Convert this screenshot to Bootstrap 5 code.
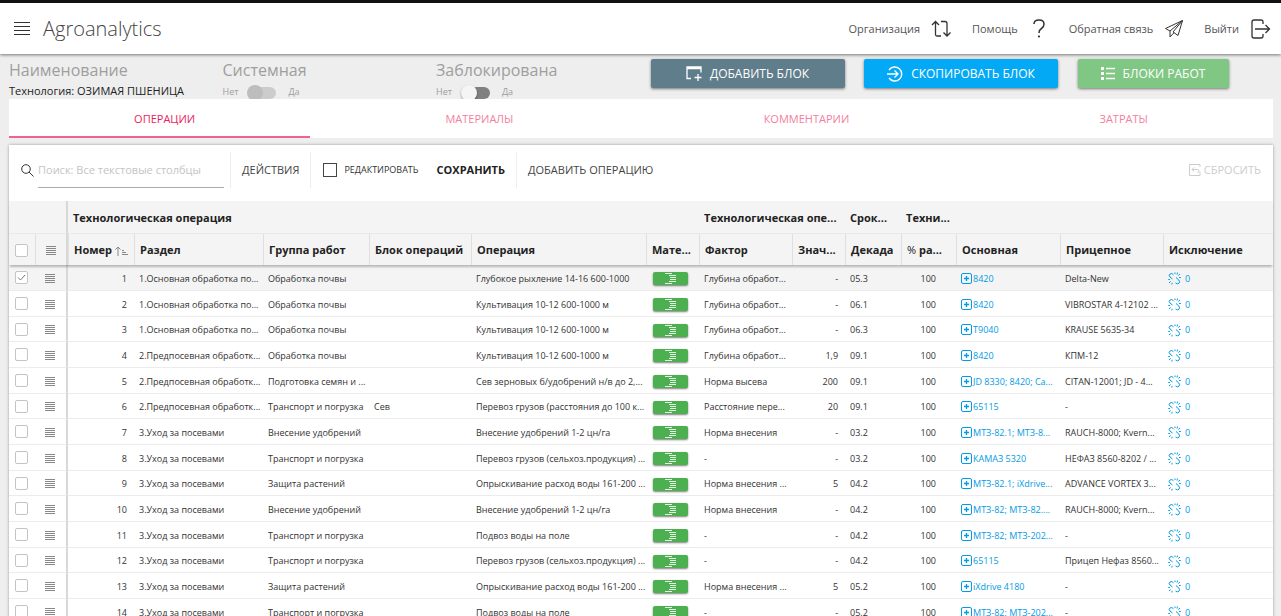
<!DOCTYPE html>
<html lang="ru">
<head>
<meta charset="utf-8">
<meta name="viewport" content="width=device-width, initial-scale=1">
<title>Agroanalytics</title>
<link href="https://cdn.jsdelivr.net/npm/bootstrap@5.3.0/dist/css/bootstrap.min.css" rel="stylesheet">
<style>
  body { font-family: "Open Sans", "Noto Sans", sans-serif; background: #eee; color: #333; font-size: 12px; overflow: hidden; height: 100vh; }
  button { font-family: inherit; }
  svg { fill: none; stroke: currentColor; flex: none; }
  .topbar { border-top: 3px solid #111; height: 54px; background: #fff; box-shadow: 0 1px 3px rgba(0,0,0,.5); position: relative; padding: 1px 10px 0 14px; }
  .brand-name { font-size: 20px; font-weight: 300; color: #444; line-height: 30px; margin-left: 13px; }
  .top-nav { gap: 20px; }
  .top-link { color: #555; font-size: 11px; text-decoration: none; gap: 11px; }
  .top-link svg { color: #333; }
  .fields { height: 45px; overflow: hidden; }
  .fields > div { padding: 0 9px; }
  .caption { font-size: 16px; line-height: 22px; color: #9e9e9e; padding-top: 5px; }
  .tech { font-size: 11px; line-height: 20px; color: #222; white-space: nowrap; }
  .toggle-row { font-size: 9px; line-height: 20px; color: #9e9e9e; padding-top: 1px; }
  .toggle { appearance: none; width: 24px; height: 12px; border-radius: 6px; margin: 5px 12px 0 14px; background: #ccc; display: inline-flex; align-items: center; }
  .toggle::before { content: ""; width: 16px; height: 16px; margin-left: -5px; flex: none; border-radius: 50%; background: #bdbdbd; }
  .toggle.on { background: #808080; }
  .toggle.on::before { background: #f5f5f5; box-shadow: 0 1px 2px rgba(0,0,0,.4); }
  .action { height: 29px; margin: 5px 0 0 1px; border: 0; border-radius: 2px; color: #fff; font-size: 12px; gap: 8px; box-shadow: 0 1px 3px rgba(0,0,0,.5); white-space: nowrap; padding: 0; width: 194px; }
  .slate { background: #607d8b; } .sky { background: #03a9f4; } .leaf { background: #81c784; width: 151px; }
  .tabs { margin: 0 8px 0 9px; background: #fff; height: 39px; }
  .tabs button { border: 0; background: none; color: #f4809f; font-size: 11px; flex: 1 1 auto; padding: 2px 0 0; }
  .tabs button.active { color: #e91e63; background: linear-gradient(#f06292, #f06292) left bottom / calc(100% - 10px) 2px no-repeat; }
  .panel { margin: 7px 8px 0 9px; background: #fff; box-shadow: 0 0 3px rgba(0,0,0,.35); }
  .tools { height: 56px; padding: 0 12px 6px; font-size: 11px; }
  .tools button { border: 0; background: none; padding: 0; color: #444; }
  .tools .spaced { margin: 0 11px; }
  .tools .save { margin: 0 11px 0 18px; color: #222; }
  .tools .reset { color: #ccc; gap: 3px; }
  .edit-box { margin-left: 12px; gap: 7px; font-size: 9px; }
  .search { width: 186px; height: 36px; border: 0; border-bottom: 1px solid #aaa; outline: 0; padding: 0; margin: 0 6px 0 4px; font-size: 11px; }
  .search::placeholder { color: #c4c4c4; }
  .rule { width: 1px; height: 36px; background: #eee; }
  .tick { appearance: none; background: #fff; border: 1px solid #c4c4c4; border-radius: 2px; width: 13px; height: 13px; display: block; margin: 0 0 0 1px; }
  .tick:checked { background: #fff url("data:image/svg+xml,%3Csvg xmlns='http://www.w3.org/2000/svg' viewBox='0 0 11 11' fill='none' stroke='%23777'%3E%3Cpath d='M2 5.500 4.500 8 9 3'/%3E%3C/svg%3E"); }
  .tick.large { width: 14px; height: 14px; border-color: #444; border-radius: 0; margin: 0; }
  .grid-table { table-layout: fixed; width: 100%; border-collapse: separate; border-spacing: 0; font-size: 9px; }
  .grid-table th, .grid-table td { padding: 0 0 0 5px; white-space: nowrap; overflow: hidden; }
  .grid-table th { background: #f4f4f4; color: #222; font-size: 11px; font-weight: 700; height: 32px; padding-top: 2px; }
  .grid-table thead { box-shadow: 0 3px 2px -1px rgba(0,0,0,.25); position: relative; }
  .grid-table thead tr:last-child th { border-top: 1px solid #e9e9e9; border-left: 1px solid #e0e0e0; }
  .grid-table thead tr:last-child th:first-child { border-left: 0; }
  .grid-table .edge, .grid-table thead tr .edge { border-right: 2px solid #d8d8d8; }
  .grid-table td { height: 26px; border-bottom: 1px solid #ececec; color: #333; padding-top: 2px; }
  .grid-table td:first-child { padding-top: 0; }
  .grid-table tr:nth-child(3n) td { height: 25px; }
  .grid-table tbody tr:first-child td { background: #f4f4f4; }
  .grid-table .num { text-align: right; padding-right: 7px; }
  .grid-table .pct { text-align: right; padding-right: 20px; }
  .grid-table a { color: #039be5; text-decoration: none; display: flex; align-items: center; }
  .grid-table .menu { color: #888; padding-left: 10px; padding-top: 0; }
  .grid-table .menu svg, .grid-table .chip svg { display: block; }
  .sort { color: #888; }
  .chip { width: 35px; height: 13px; border: 0; border-radius: 2px; background: #4caf50; color: #e4f5e5; box-shadow: 0 1px 2px rgba(0,0,0,.5); display: flex; align-items: center; justify-content: center; padding: 0; margin-left: 2px; }
</style>
</head>
<body>
<svg class="d-none">
  <symbol id="i-menu" viewBox="0 0 10 10"><path d="M0 1.500H10M0 3.500H10M0 5.500H10M0 7.500H10M0 9.500H10"/></symbol>
  <symbol id="i-chip" viewBox="0 0 12 11"><path d="M0 .5H7M4 2.500H11M5 4.500H11M5 6.500H11M4 8.500H11M0 10.500H7"/></symbol>
  <symbol id="i-plus" viewBox="0 0 12 12"><rect x=".5" y=".5" width="10" height="10" rx="1.500"/><path d="M5.500 3V8M3 5.500H8" stroke-width="1.300"/></symbol>
  <symbol id="i-unlink" viewBox="0 0 13 13"><path d="M5.500 2.800Q3.800 .6 2 2T2 5L4.500 7M8 5.500 10.800 8Q12.300 9.800 11 11.200T7.500 11"/><path d="M7 .5V2M9.500 .5 9 2.500M12 2 10.300 3.500M12.800 5.500H11M.3 7.500H2M1 11 2.700 9.500M3.800 12.500 4.200 10.800"/></symbol>
</svg>

<header class="topbar d-flex align-items-center">
  <svg width="16" height="14" viewBox="0 0 16 14"><path d="M0 .5H16M0 4.500H16M0 8.500H16M0 12.500H16"/></svg>
  <span class="brand-name me-auto">Agroanalytics</span>
  <nav class="top-nav d-flex align-items-center">
    <a class="top-link d-flex align-items-center" href="#">Организация
      <svg width="21" height="18" viewBox="0 0 21 18" stroke-width="1.300"><path d="M1 5 4.500 1.500 8 5M4.500 1.500V14.500Q4.500 16 6 16H10M10 1.500H14Q16 1.500 16 3.500V16M12.500 12.500 16 16 19.500 12.500"/></svg></a>
    <a class="top-link d-flex align-items-center" href="#">Помощь
      <svg class="ms-1 me-1" width="12" height="20" viewBox="0 0 12 20" stroke-width="1.500"><path d="M1 5Q1 1 6 1T11 5Q11 8 8.500 9.500 6 11 6 14"/><circle cx="6" cy="17.500" r="1.100" fill="currentColor" stroke="none"/></svg></a>
    <a class="top-link d-flex align-items-center" href="#">Обратная связь
      <svg width="20" height="20" viewBox="0 0 20 20"><path d="M18.500 1.500 1.500 9.500 6 12 18.500 1.500 14 16.500 9 13 18.500 1.500M6 12V18L10 13.700"/></svg></a>
    <a class="top-link d-flex align-items-center" href="#">Выйти
      <svg width="21" height="20" viewBox="0 0 21 20" stroke-width="1.300"><path d="M13 5V3Q13 1 11 1H4Q2 1 2 3V17Q2 19 4 19H11Q13 19 13 17V15M5 10H19M15.500 6 19.500 10 15.500 14"/></svg></a>
  </nav>
</header>

<main>
  <section class="row g-0 fields">
    <div class="col-2"><div class="caption">Наименование</div><div class="tech">Технология: ОЗИМАЯ ПШЕНИЦА</div></div>
    <div class="col-2"><div class="caption">Системная</div>
      <label class="toggle-row d-flex"><span>Нет</span><input class="toggle" type="checkbox" role="switch" disabled><span>Да</span></label></div>
    <div class="col-2"><div class="caption">Заблокирована</div>
      <label class="toggle-row d-flex"><span>Нет</span><input class="toggle on" type="checkbox" role="switch"><span>Да</span></label></div>
    <div class="col-2"><button class="action slate d-flex align-items-center justify-content-center">
      <svg width="16" height="15" viewBox="0 0 16 15" stroke-width="1.300"><path d="M5 12.500H1V1H15V6.500M1 2.500H15M12 8V15M8.500 11.500H15.500"/></svg>ДОБАВИТЬ БЛОК</button></div>
    <div class="col-2"><button class="action sky d-flex align-items-center justify-content-center">
      <svg width="16" height="16" viewBox="0 0 16 16" stroke-width="1.400"><path d="M2 4A7 7 0 1 1 2 12M0 8H11M7.500 4.500 11 8 7.500 11.500"/></svg>СКОПИРОВАТЬ БЛОК</button></div>
    <div class="col-2"><button class="action leaf d-flex align-items-center justify-content-center">
      <svg width="14" height="13" viewBox="0 0 14 13" stroke-width="1.300"><path d="M5 1.500H14M5 6.500H14M5 11.500H14"/><path d="M0 1.500H3M0 6.500H3M0 11.500H3" stroke-width="3"/></svg>БЛОКИ РАБОТ</button></div>
  </section>

  <nav class="tabs d-flex">
    <button class="active">ОПЕРАЦИИ</button><button>МАТЕРИАЛЫ</button><button>КОММЕНТАРИИ</button><button>ЗАТРАТЫ</button>
  </nav>

  <section class="panel">
    <div class="tools d-flex align-items-center">
      <svg width="13" height="13" viewBox="0 0 13 13"><circle cx="5" cy="5" r="4.300"/><path d="M8 8 12.500 12.500"/></svg>
      <input class="search" type="text" aria-label="Поиск" placeholder="Поиск: Все текстовые столбцы">
      <span class="rule"></span>
      <button class="spaced">ДЕЙСТВИЯ</button>
      <span class="rule"></span>
      <label class="edit-box d-flex align-items-center"><input class="tick large" type="checkbox"><span>РЕДАКТИРОВАТЬ</span></label>
      <button class="fw-bold save">СОХРАНИТЬ</button>
      <span class="rule"></span>
      <button class="spaced">ДОБАВИТЬ ОПЕРАЦИЮ</button>
      <button class="ms-auto d-flex align-items-center reset" disabled><svg width="12" height="12" viewBox="0 0 12 12"><path d="M11 3V.5H.5V11.500H11V8M3 5.500H8.500Q10 5.500 10 7T8.500 8.500M5 3.500 3 5.500 5 7.500"/></svg>СБРОСИТЬ</button>
    </div>
    <table class="grid-table">
      <colgroup>
        <col style="width:26px"><col style="width:33px"><col style="width:66px"><col style="width:129px"><col style="width:106px"><col style="width:102px"><col style="width:175px"><col style="width:53px"><col style="width:93px"><col style="width:53px"><col style="width:56px"><col style="width:55px"><col style="width:104px"><col style="width:103px"><col>
      </colgroup>
      <thead>
        <tr><th colspan="2" class="edge"></th><th colspan="6">Технологическая операция</th><th colspan="2">Технологическая опе...</th><th>Срок...</th><th>Техни...</th><th colspan="3"></th></tr>
        <tr><th><input class="tick" type="checkbox" aria-label="Выбрать все"></th><th class="menu edge"><svg width="10" height="10"><use href="#i-menu"/></svg></th>
          <th>Номер <svg class="sort" width="13" height="10" viewBox="0 0 13 10"><path d="M3 10V1M.5 3.500 3 1 5.500 3.500M7 4.500H9M7 6.500H11M7 8.500H13"/></svg></th><th>Раздел</th><th>Группа работ</th><th>Блок операций</th><th>Операция</th><th>Мате...</th><th>Фактор</th><th>Знач...</th><th>Декада</th><th><span class="fw-normal">%</span> ра...</th><th>Основная</th><th>Прицепное</th><th>Исключение</th></tr>
      </thead>
      <tbody id="rows"></tbody>
    </table>
  </section>
</main>

<script src="https://cdn.jsdelivr.net/npm/bootstrap@5.3.0/dist/js/bootstrap.bundle.min.js"></script>
<script>
  const base = '1.Основная обработка по...', pre = '2.Предпосевная обработк...', care = '3.Уход за посевами';
  const soil = 'Обработка почвы', haul = 'Транспорт и погрузка', fert = 'Внесение удобрений', guard = 'Защита растений';
  const depth = 'Глубина обработ...';
  const data = [
    [base, soil, '', 'Глубокое рыхление 14-16 600-1000', depth, '-', '05.3', '8420', 'Delta-New'],
    [base, soil, '', 'Культивация 10-12 600-1000 м', depth, '-', '06.1', '8420', 'VIBROSTAR 4-12102 ...'],
    [base, soil, '', 'Культивация 10-12 600-1000 м', depth, '-', '06.3', 'T9040', 'KRAUSE 5635-34'],
    [pre, soil, '', 'Культивация 10-12 600-1000 м', depth, '1,9', '09.1', '8420', 'КПМ-12'],
    [pre, 'Подготовка семян и ...', '', 'Сев зерновых б/удобрений н/в до 2,...', 'Норма высева', '200', '09.1', 'JD 8330; 8420; Ca...', 'CITAN-12001; JD - 4...'],
    [pre, haul, 'Сев', 'Перевоз грузов (расстояния до 100 к...', 'Расстояние пере...', '20', '09.1', '65115', '-'],
    [care, fert, '', 'Внесение удобрений 1-2 цн/га', 'Норма внесения', '-', '03.2', 'МТЗ-82.1; МТЗ-8...', 'RAUCH-8000; Kvern...'],
    [care, haul, '', 'Перевоз грузов (сельхоз.продукция) ...', '-', '-', '03.2', 'КАМАЗ 5320', 'НЕФАЗ 8560-8202 / ...'],
    [care, guard, '', 'Опрыскивание расход воды 161-200 ...', 'Норма внесения ...', '5', '04.2', 'МТЗ-82.1; iXdrive...', 'ADVANCE VORTEX 3...'],
    [care, fert, '', 'Внесение удобрений 1-2 цн/га', 'Норма внесения', '-', '04.2', 'МТЗ-82; МТЗ-82....', 'RAUCH-8000; Kvern...'],
    [care, haul, '', 'Подвоз воды на поле', '-', '-', '04.2', 'МТЗ-82; МТЗ-202...', '-'],
    [care, haul, '', 'Перевоз грузов (сельхоз.продукция) ...', '-', '-', '04.2', '65115', 'Прицеп Нефаз 8560...'],
    [care, guard, '', 'Опрыскивание расход воды 161-200 ...', 'Норма внесения ...', '5', '05.2', 'iXdrive 4180', '-'],
    [care, haul, '', 'Подвоз воды на поле', '-', '-', '05.2', 'МТЗ-82; МТЗ-202...', '-']
  ];
  document.getElementById('rows').innerHTML = data.map((r, i) => `<tr>
    <td><input class="tick" type="checkbox" aria-label="Строка ${i + 1}" ${i ? '' : 'checked'}></td>
    <td class="menu edge"><svg width="10" height="10"><use href="#i-menu"/></svg></td>
    <td class="num">${i + 1}</td><td>${r[0]}</td><td>${r[1]}</td><td>${r[2]}</td><td>${r[3]}</td>
    <td><button class="chip" aria-label="Материалы"><svg width="12" height="11"><use href="#i-chip"/></svg></button></td>
    <td>${r[4]}</td><td class="num">${r[5]}</td><td>${r[6]}</td><td class="pct">100</td>
    <td><a href="#"><svg width="12" height="12"><use href="#i-plus"/></svg>${r[7]}</a></td>
    <td>${r[8]}</td>
    <td><a href="#"><svg class="me-1" width="13" height="13"><use href="#i-unlink"/></svg>0</a></td></tr>`).join('');
</script>
</body>
</html>
